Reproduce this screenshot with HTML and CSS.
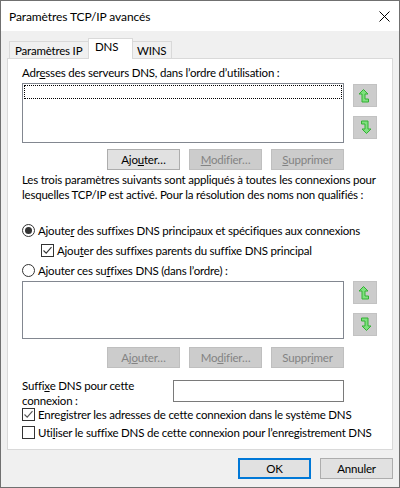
FILE: index.html
```html
<!DOCTYPE html>
<html lang="fr">
<head>
<meta charset="utf-8">
<title>Paramètres TCP/IP avancés</title>
<link rel="stylesheet" href="styles.css">
</head>
<body>
<div class="window">
  <div class="titlebar">
    <span class="title">Paramètres TCP/IP avancés</span>
    <svg class="close" width="11" height="11" viewBox="0 0 11 11"><path d="M0.5 0.5 L10.5 10.5 M10.5 0.5 L0.5 10.5" stroke="#000" stroke-width="1" fill="none"/></svg>
  </div>
  <div class="main">
    <div class="tabs">
      <div class="tab t1">Paramètres IP</div>
      <div class="tab t2 active">DNS</div>
      <div class="tab t3">WINS</div>
    </div>
    <div class="panel">
      <div class="label">Adr<u>e</u>sses des serveurs DNS, dans l’ordre d’utilisation :</div>
      <div class="listrow first">
        <div class="listbox lb1"><div class="focus"></div></div>
        <div class="arrows">
          <div class="arrowbtn"><svg width="24" height="23" viewBox="0 0 24 23"><path class="arr" d="M10.5 5.5 L15 10 L12 10 L12 15 L15.5 15 L15.5 18 L9 18 L9 10 L6 10 Z"/></svg></div>
          <div class="arrowbtn"><svg width="24" height="23" viewBox="0 0 24 23"><path class="arr" d="M13.5 17.5 L9 13 L12 13 L12 8 L8.5 8 L8.5 5 L15 5 L15 13 L18 13 Z"/></svg></div>
        </div>
      </div>
      <div class="btnrow">
        <div class="btn">Ajo<u>u</u>ter…</div>
        <div class="btn disabled"><u>M</u>odifier…</div>
        <div class="btn disabled"><u>S</u>upprimer</div>
      </div>
      <p class="para">Les trois paramètres suivants sont appliqués à toutes les connexions pour<br>lesquelles TCP/IP est activé. Pour la résolution des noms non qualifiés :</p>
      <div class="options">
        <div class="opt"><span class="radio checked"></span><span>Ajoute<u>r</u> des suffixes DNS principaux et spécifiques aux connexions</span></div>
        <div class="opt sub"><span class="check"><svg width="11" height="11" viewBox="0 0 11 11"><path d="M1.5 5.5 L4.2 8.2 L9.5 2.2" stroke="#333" stroke-width="1.1" fill="none"/></svg></span><span>Ajou<u>t</u>er des suffixes parents du suffixe DNS principal</span></div>
        <div class="opt"><span class="radio"></span><span>Ajouter ces su<u>f</u>fixes DNS (dans l’ordre) :</span></div>
      </div>
      <div class="listrow second">
        <div class="listbox lb2"></div>
        <div class="arrows">
          <div class="arrowbtn"><svg width="24" height="23" viewBox="0 0 24 23"><path class="arr" d="M10.5 5.5 L15 10 L12 10 L12 15 L15.5 15 L15.5 18 L9 18 L9 10 L6 10 Z"/></svg></div>
          <div class="arrowbtn"><svg width="24" height="23" viewBox="0 0 24 23"><path class="arr" d="M13.5 17.5 L9 13 L12 13 L12 8 L8.5 8 L8.5 5 L15 5 L15 13 L18 13 Z"/></svg></div>
        </div>
      </div>
      <div class="btnrow row2">
        <div class="btn disabled">Aj<u>o</u>uter…</div>
        <div class="btn disabled">Mo<u>d</u>ifier…</div>
        <div class="btn disabled">Suppr<u>i</u>mer</div>
      </div>
      <div class="suffix">
        <div class="suffix-label">Suffi<u>x</u>e DNS pour cette<br>connexion :</div>
        <div class="textbox"></div>
      </div>
      <div class="checks">
        <div class="opt"><span class="check"><svg width="11" height="11" viewBox="0 0 11 11"><path d="M1.5 5.5 L4.2 8.2 L9.5 2.2" stroke="#555" stroke-width="1.1" fill="none"/></svg></span><span>Enre<u>g</u>istrer les adresses de cette connexion dans le système DNS</span></div>
        <div class="opt"><span class="check"></span><span>Uti<u>l</u>iser le suffixe DNS de cette connexion pour l’enregistrement DNS</span></div>
      </div>
    </div>
    <div class="footer">
      <div class="btn default">OK</div>
      <div class="btn">Annuler</div>
    </div>
  </div>
</div>
</body>
</html>
```
FILE: styles.css
```css
html, body {
  margin: 0;
  padding: 0;
  background: #f0f0f0;
}
body {
  font-family: Lato, "Noto Sans", sans-serif;
  font-size: 11.5px;
  letter-spacing: -0.2px;
  line-height: 15px;
  color: #000;
  white-space: nowrap;
}
u {
  text-decoration: underline;
  text-underline-offset: 1px;
}
.window {
  width: 400px;
  height: 488px;
  box-sizing: border-box;
  border: 1px solid #707070;
  background: #f0f0f0;
  display: flex;
  flex-direction: column;
  overflow: hidden;
}
.titlebar {
  height: 30px;
  flex: none;
  background: #fff;
  display: flex;
  align-items: center;
  justify-content: space-between;
  padding: 0 9px 0 8px;
}
.title {
  font-size: 12px;
  letter-spacing: -0.1px;
}
.close {
  display: block;
}
.main {
  flex: 1;
  display: flex;
  flex-direction: column;
  padding: 7px 6px 8px 6px;
  min-height: 0;
}
.tabs {
  display: flex;
  align-items: flex-end;
  height: 21px;
  flex: none;
  padding-left: 2px;
}
.tab {
  box-sizing: border-box;
  height: 18px;
  border: 1px solid #d9d9d9;
  border-bottom: none;
  background: #f0f0f0;
  line-height: 15px;
  padding-top: 1px;
  padding-left: 5px;
}
.t1 { width: 80px; }
.t2 { width: 45px; margin-left: -1px; }
.t3 { width: 40px; margin-left: -1px; padding-left: 4px; }
.tab.active {
  height: 21px;
  background: #fff;
  position: relative;
  z-index: 1;
  padding-top: 0;
  padding-left: 6px;
}
.panel {
  flex: 1;
  min-height: 0;
  margin-top: -1px;
  border: 1px solid #d9d9d9;
  background: #fff;
  padding: 6px 14px 8px 14px;
  display: flex;
  flex-direction: column;
}
.label {
  height: 15px;
  flex: none;
}
.listrow {
  display: flex;
  gap: 9px;
  flex: none;
}
.listrow.first {
  margin-top: 3px;
}
.listrow.second {
  margin-top: 1px;
}
.listbox {
  box-sizing: border-box;
  width: 322px;
  border: 1px solid #828790;
  background: #fff;
  padding: 1px;
}
.lb1 { height: 60px; }
.lb2 { height: 58px; }
.focus {
  height: 14px;
  border: 1px dotted #000;
  box-sizing: border-box;
}
.arrows {
  display: flex;
  flex-direction: column;
  gap: 9px;
}
.first .arrows {
  padding-top: 1px;
}
.arrowbtn {
  box-sizing: border-box;
  width: 24px;
  height: 23px;
  background: #cccccc;
  border: 1px solid #c2c2c2;
}
.arrowbtn svg {
  display: block;
  margin: -1px;
}
.arr {
  fill: #7ee07e;
  stroke: #33b033;
  stroke-width: 1;
  stroke-linejoin: miter;
}
.btnrow {
  width: 322px;
  display: flex;
  justify-content: flex-end;
  gap: 9px;
  margin-top: 6px;
  flex: none;
}
.btnrow.row2 {
  margin-top: 8px;
}
.btn {
  box-sizing: border-box;
  width: 73px;
  height: 21px;
  border: 1px solid #adadad;
  background: #e1e1e1;
  text-align: center;
  line-height: 19px;
}
.btn.disabled {
  background: #cccccc;
  border-color: #bfbfbf;
  color: #838383;
}
.btn.default {
  border-color: #0078d7;
  box-shadow: inset 0 0 0 1px #0078d7;
}
.para {
  margin: 2px 0 0 0;
  flex: none;
}
.options {
  margin-top: 18px;
  display: flex;
  flex-direction: column;
  flex: none;
}
.opt {
  display: flex;
  align-items: center;
  height: 20px;
}
.opt.sub {
  padding-left: 19px;
}
.radio {
  box-sizing: border-box;
  width: 13px;
  height: 13px;
  border: 1px solid #333;
  border-radius: 50%;
  background: #fff;
  margin-right: 3px;
  display: flex;
  align-items: center;
  justify-content: center;
  flex: none;
}
.radio.checked::after {
  content: "";
  width: 7px;
  height: 7px;
  border-radius: 50%;
  background: #333;
}
.check {
  box-sizing: border-box;
  width: 13px;
  height: 13px;
  border: 1px solid #333;
  background: #fff;
  margin-right: 3px;
  flex: none;
}
.check svg {
  display: block;
}
.suffix {
  margin-top: 10px;
  display: flex;
  width: 322px;
  flex: none;
}
.suffix-label {
  width: 151px;
}
.textbox {
  box-sizing: border-box;
  width: 171px;
  height: 22px;
  margin-top: 2px;
  border: 1px solid #7a7a7a;
  background: #fff;
}
.checks {
  margin-top: -3px;
  display: flex;
  flex-direction: column;
  flex: none;
}
.checks .opt {
  height: 18px;
}
.footer {
  display: flex;
  justify-content: flex-end;
  gap: 9px;
  margin-top: 8px;
  flex: none;
}
```
